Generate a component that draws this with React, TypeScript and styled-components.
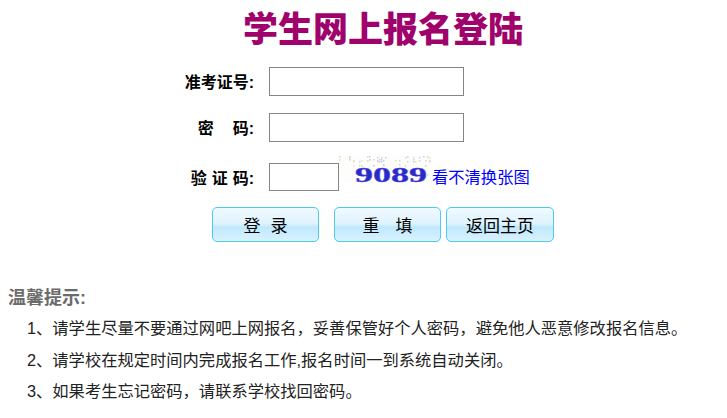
import React from "react";
import styled, { createGlobalStyle } from "styled-components";

const GlobalStyle = createGlobalStyle`
  html, body {
    margin: 0;
    padding: 0;
    background: #fff;
    overflow: hidden;
  }
  body {
    font-family: "Liberation Sans", "Noto Sans CJK SC", sans-serif;
  }
`;

const Page = styled.div`
  width: 727px;
  height: 418px;
  overflow: hidden;
`;

const Title = styled.h1`
  margin: 0;
  padding: 8px 0 0 39px;
  height: 58px;
  box-sizing: border-box;
  text-align: center;
  font-size: 35px;
  line-height: 44px;
  font-weight: 900;
  color: #a0026c;
`;

const Form = styled.form`
  display: flex;
  flex-direction: column;
`;

const Row = styled.div<{ $height: number }>`
  display: grid;
  grid-template-columns: 254px auto;
  column-gap: 15px;
  align-items: center;
  height: ${(p) => p.$height}px;
`;

const Label = styled.label`
  text-align: right;
  font-size: 16px;
  font-weight: bold;
  color: #000;
  white-space: pre;
`;

const Gap = styled.span<{ $width: number }>`
  display: inline-block;
  width: ${(p) => p.$width}px;
`;

const Field = styled.div`
  display: flex;
  align-items: center;
`;

const Input = styled.input<{ $width: number; $height: number }>`
  box-sizing: border-box;
  width: ${(p) => p.$width}px;
  height: ${(p) => p.$height}px;
  border: 1px solid #858585;
  background: #fff;
  padding: 0;
  outline: none;
`;

const Captcha = styled.svg`
  display: block;
  flex: none;
  margin: -12px 0 0 0;
`;

const RefreshLink = styled.a`
  font-size: 16.3px;
  color: #0000ff;
  text-decoration: none;
  margin: -2px 0 0 1px;
`;

const Buttons = styled.div`
  display: flex;
  padding: 3px 0 0 212px;
`;

const Button = styled.button<{ $width: number; $gap: number }>`
  box-sizing: border-box;
  width: ${(p) => p.$width}px;
  height: 35px;
  margin-right: ${(p) => p.$gap}px;
  padding: 0;
  border: 1.5px solid #4ccbef;
  border-radius: 5px;
  background: linear-gradient(#eff9ff 0%, #dff3fe 48%, #bfe8fd 58%, #d9f2fe 100%);
  font-family: inherit;
  font-size: 17px;
  color: #000;
  white-space: pre;
`;

const Tips = styled.div`
  padding: 45px 0 0 8px;
`;

const TipsTitle = styled.div`
  font-size: 18px;
  line-height: 22px;
  font-weight: bold;
  color: #6b6b6b;
  margin-bottom: 4px;
`;

const TipLine = styled.p`
  margin: 0;
  padding-left: 19px;
  font-size: 16.3px;
  line-height: 31.5px;
  color: #222;
  white-space: nowrap;
`;

const noiseColors = ["#e4d8a8", "#bccfee", "#f0c8e8", "#c8e2b4", "#d4c8f0", "#eedcc4"];

// fixed pseudo random speckle for the captcha background
const dots = Array.from({ length: 64 }, (_, i) => ({
  x: (i * i * 7 + i * 23) % 92,
  y: (i * i * 3 + i * 11) % (i % 4 === 0 ? 26 : 11),
  c: noiseColors[i % noiseColors.length],
}));

function CaptchaImage() {
  return (
    <Captcha width="92" height="30" viewBox="0 0 92 30">
      <rect width="92" height="26" fill="#fdfdfb" />
      {dots.map((d, i) => (
        <rect key={i} x={d.x} y={d.y} width="1.5" height="1.5" fill={d.c} />
      ))}
      <text
        x="16"
        y="25.5"
        fontFamily="'Liberation Serif', serif"
        fontWeight="bold"
        fontSize="22"
        textLength="72"
        lengthAdjust="spacingAndGlyphs"
        fill="#2a2ac8"
        stroke="#4a4ad8"
        strokeWidth="0.4"
      >
        9089
      </text>
    </Captcha>
  );
}

export default function App() {
  return (
    <Page>
      <GlobalStyle />
      <Title>学生网上报名登陆</Title>
      <Form onSubmit={(e) => e.preventDefault()}>
        <Row $height={46}>
          <Label>准考证号:</Label>
          <Field>
            <Input $width={195} $height={29} />
          </Field>
        </Row>
        <Row $height={46}>
          <Label>密<Gap $width={19} />码:</Label>
          <Field>
            <Input $width={195} $height={29} type="password" />
          </Field>
        </Row>
        <Row $height={54}>
          <Label>验<Gap $width={5} />证<Gap $width={5} />码:</Label>
          <Field>
            <Input $width={70} $height={28} />
            <CaptchaImage />
            <RefreshLink href="#">看不清换张图</RefreshLink>
          </Field>
        </Row>
        <Buttons>
          <Button type="submit" $width={107} $gap={15}>登<Gap $width={10} />录</Button>
          <Button type="reset" $width={107} $gap={5}>重<Gap $width={16} />填</Button>
          <Button type="button" $width={108} $gap={0}>返回主页</Button>
        </Buttons>
      </Form>
      <Tips>
        <TipsTitle>温馨提示:</TipsTitle>
        <TipLine>1、请学生尽量不要通过网吧上网报名，妥善保管好个人密码，避免他人恶意修改报名信息。</TipLine>
        <TipLine>2、请学校在规定时间内完成报名工作,报名时间一到系统自动关闭。</TipLine>
        <TipLine>3、如果考生忘记密码，请联系学校找回密码。</TipLine>
      </Tips>
    </Page>
  );
}
